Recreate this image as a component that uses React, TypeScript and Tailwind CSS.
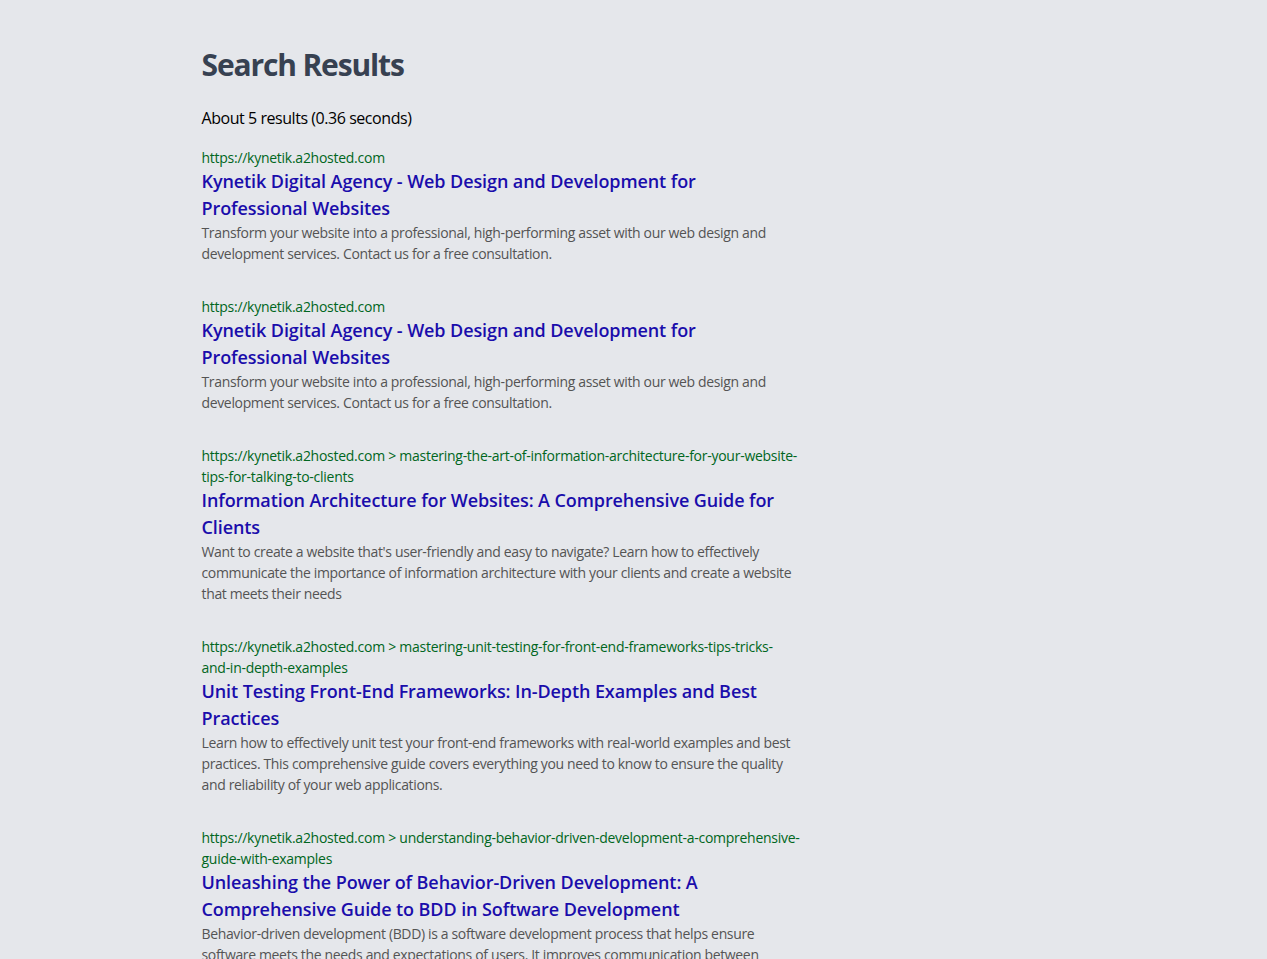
import React from "react";

type R = { url: string; path?: string; tail?: string; title: string; desc: string };

const results: R[] = [
  {
    url: "https://kynetik.a2hosted.com",
    title: "Kynetik Digital Agency - Web Design and Development for Professional Websites",
    desc: "Transform your website into a professional, high-performing asset with our web design and development services. Contact us for a free consultation.",
  },
  {
    url: "https://kynetik.a2hosted.com",
    title: "Kynetik Digital Agency - Web Design and Development for Professional Websites",
    desc: "Transform your website into a professional, high-performing asset with our web design and development services. Contact us for a free consultation.",
  },
  {
    url: "https://kynetik.a2hosted.com",
    path: "mastering-the-art-of-information-architecture-for-your-website-tips-for-talking-to-clients",
    title: "Information Architecture for Websites: A Comprehensive Guide for Clients",
    desc: "Want to create a website that's user-friendly and easy to navigate? Learn how to effectively communicate the importance of information architecture with your clients and create a website that meets their needs",
  },
  {
    url: "https://kynetik.a2hosted.com",
    path: "mastering-unit-testing-for-front-end-frameworks-tips-tricks-",
    tail: "and-in-depth-examples",
    title: "Unit Testing Front-End Frameworks: In-Depth Examples and Best Practices",
    desc: "Learn how to effectively unit test your front-end frameworks with real-world examples and best practices. This comprehensive guide covers everything you need to know to ensure the quality and reliability of your web applications.",
  },
  {
    url: "https://kynetik.a2hosted.com",
    path: "understanding-behavior-driven-development-a-comprehensive-guide-with-examples",
    title: "Unleashing the Power of Behavior-Driven Development: A Comprehensive Guide to BDD in Software Development",
    desc: "Behavior-driven development (BDD) is a software development process that helps ensure software meets the needs and expectations of users. It improves communication between developers, testers, and business stakeholders.",
  },
];

export default function App() {
  return (
    <div
      className="min-h-screen bg-[#e5e7eb]"
      style={{ fontFamily: '"Open Sans", "Noto Sans", sans-serif' }}
    >
      <div className="mx-auto max-w-5xl px-20 pt-[47px] pb-12">
        <h1 className="mb-[23px] text-3xl font-bold tracking-[-0.038em] text-[#374151]">
          Search Results
        </h1>
        <p className="mb-[17px] text-base tracking-[-0.028em] text-black">
          About 5 results (0.36 seconds)
        </p>
        <div className="max-w-[600px]">
          {results.map((r, i) => (
            <div key={i} className="mb-8">
              <div className="text-sm leading-[21px] tracking-[-0.019em] text-[#006621] break-words">
                {r.url}
                {r.path ? <> &gt; {r.path}</> : null}
                {r.tail ? <span className="whitespace-nowrap">{r.tail}</span> : null}
              </div>
              <a
                href="#"
                className="block text-lg font-semibold leading-[27px] tracking-[-0.005em] text-[#1a0dab]"
              >
                {r.title}
              </a>
              <p className="text-sm leading-[21px] tracking-[-0.025em] text-[#545454]">{r.desc}</p>
            </div>
          ))}
        </div>
      </div>
    </div>
  );
}
